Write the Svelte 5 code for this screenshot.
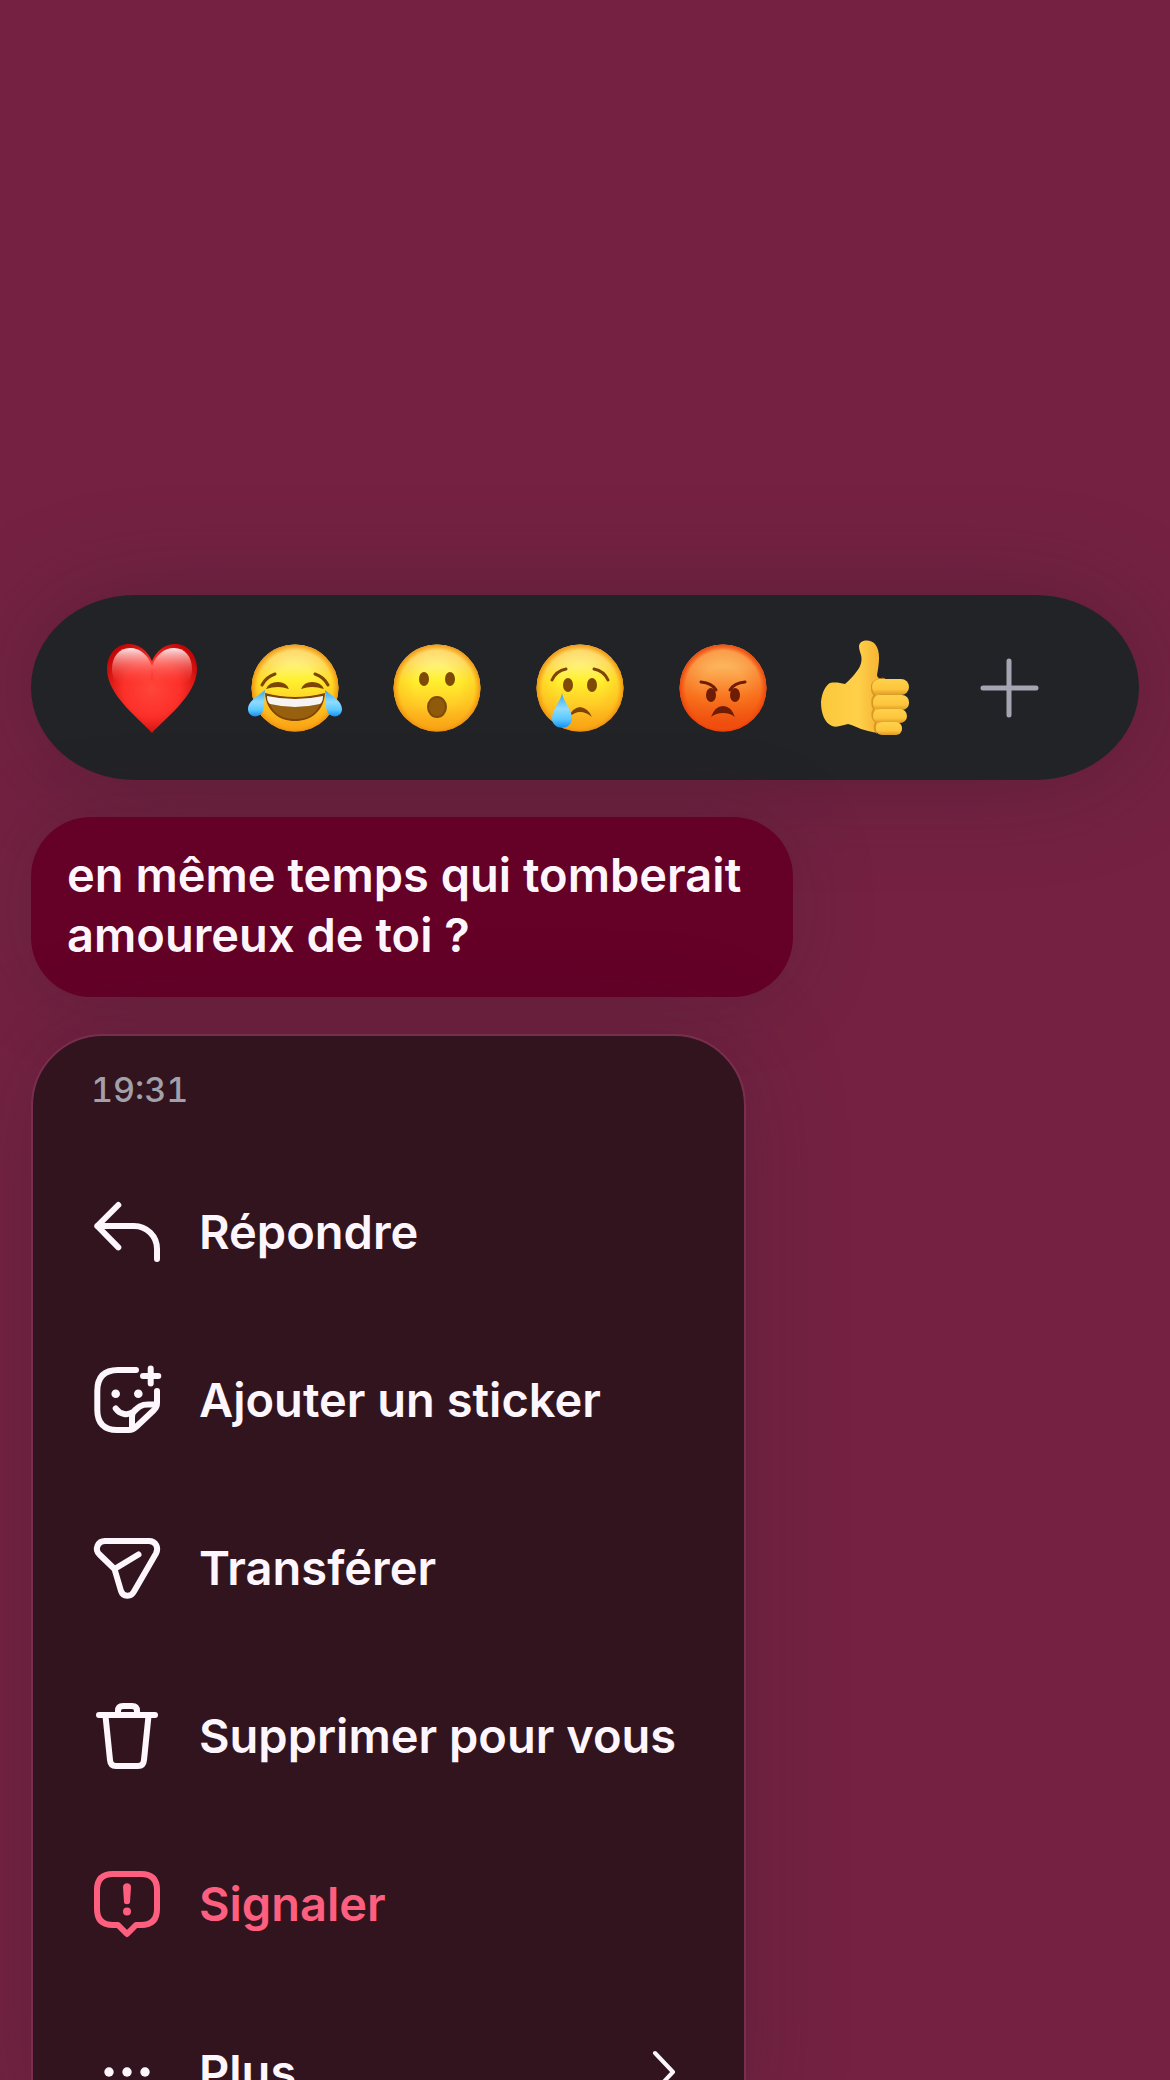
<script lang="ts">
	type IconName = 'reply' | 'sticker' | 'forward' | 'trash' | 'report' | 'more';

	interface MenuItem {
		icon: IconName;
		label: string;
		danger?: boolean;
		submenu?: boolean;
	}

	const reactions = [
		{ id: 'heart', label: 'Cœur' },
		{ id: 'joy', label: 'Mort de rire' },
		{ id: 'wow', label: 'Surpris' },
		{ id: 'cry', label: 'Triste' },
		{ id: 'angry', label: 'En colère' },
		{ id: 'thumb', label: 'Pouce levé' }
	];

	const items: MenuItem[] = [
		{ icon: 'reply', label: 'Répondre' },
		{ icon: 'sticker', label: 'Ajouter un sticker' },
		{ icon: 'forward', label: 'Transférer' },
		{ icon: 'trash', label: 'Supprimer pour vous' },
		{ icon: 'report', label: 'Signaler', danger: true },
		{ icon: 'more', label: 'Plus', submenu: true }
	];
</script>

<!-- shared gradients for the emoji -->
<svg class="defs" aria-hidden="true">
	<defs>
		<linearGradient id="face" x1="0" y1="0" x2="0" y2="1">
			<stop offset="0" stop-color="#fff3a8" />
			<stop offset="0.2" stop-color="#fff285" />
			<stop offset="0.42" stop-color="#fff02e" />
			<stop offset="0.7" stop-color="#ffcb26" />
			<stop offset="1" stop-color="#f79a12" />
		</linearGradient>
		<radialGradient id="rim" cx="0.5" cy="0.5" r="0.5">
			<stop offset="0.5" stop-color="#fbac18" stop-opacity="0" />
			<stop offset="0.86" stop-color="#fbac18" stop-opacity="0.35" />
			<stop offset="0.93" stop-color="#f8a414" stop-opacity="0.75" />
			<stop offset="1" stop-color="#ee8f10" stop-opacity="0.95" />
		</radialGradient>
		<linearGradient id="rage" x1="0" y1="0" x2="0" y2="1">
			<stop offset="0" stop-color="#fdc069" />
			<stop offset="0.25" stop-color="#fcb55c" />
			<stop offset="0.6" stop-color="#f9761f" />
			<stop offset="1" stop-color="#ea420a" />
		</linearGradient>
		<radialGradient id="rageRim" cx="0.5" cy="0.5" r="0.5">
			<stop offset="0.5" stop-color="#f4520c" stop-opacity="0" />
			<stop offset="0.86" stop-color="#f4520c" stop-opacity="0.3" />
			<stop offset="0.93" stop-color="#f25010" stop-opacity="0.75" />
			<stop offset="1" stop-color="#ea4208" stop-opacity="0.95" />
		</radialGradient>
		<radialGradient id="heart" cx="0.5" cy="0.5" r="0.58">
			<stop offset="0" stop-color="#ff453b" />
			<stop offset="0.55" stop-color="#fc3029" />
			<stop offset="1" stop-color="#c20606" />
		</radialGradient>
		<linearGradient id="gloss" x1="0" y1="0" x2="0" y2="1">
			<stop offset="0" stop-color="#fff" stop-opacity="0.9" />
			<stop offset="0.35" stop-color="#ff9a95" stop-opacity="0.6" />
			<stop offset="0.8" stop-color="#ff5048" stop-opacity="0" />
		</linearGradient>
		<linearGradient id="tear" x1="0" y1="0" x2="0" y2="1">
			<stop offset="0" stop-color="#2fa4f5" />
			<stop offset="0.45" stop-color="#8fdcff" />
			<stop offset="0.75" stop-color="#5cc8ff" />
			<stop offset="1" stop-color="#1590f0" />
		</linearGradient>
		<linearGradient id="hand" x1="0" y1="0" x2="1" y2="0">
			<stop offset="0" stop-color="#fcc83a" />
			<stop offset="0.5" stop-color="#ffd04a" />
			<stop offset="0.75" stop-color="#f6b836" />
			<stop offset="1" stop-color="#ffc93e" />
		</linearGradient>
		<linearGradient id="finger" x1="0" y1="0" x2="0" y2="1">
			<stop offset="0" stop-color="#ffd24c" />
			<stop offset="0.65" stop-color="#fdc53c" />
			<stop offset="1" stop-color="#dd9a26" />
		</linearGradient>
	</defs>
</svg>

<main class="screen">
	<div class="reactions" role="toolbar" aria-label="Réactions">
		{#each reactions as { id, label } (id)}
			<button class="reaction" aria-label={label}>
				<svg viewBox="-50 -50 100 100" aria-hidden="true">
					{#if id === 'heart'}
						<path
							fill="url(#heart)"
							d="M0 45C-10 33-45 8-45-19C-45-34-35-44-23-44C-13-44-4-37 0-27C4-37 13-44 23-44C35-44 45-34 45-19C45 8 10 33 0 45Z"
						/>
						<path
							fill="url(#gloss)"
							d="M-22-40C-33-40-40-31-40-19C-40-6-30 4-20 4C-9 4 0-4 0-22C-4-33-12-40-22-40Z"
						/>
						<path
							fill="url(#gloss)"
							d="M22-40C33-40 40-31 40-19C40-6 30 4 20 4C9 4 0-4 0-22C4-33 12-40 22-40Z"
						/>
					{:else if id === 'thumb'}
						<path
							fill="url(#hand)"
							d="M-6-42C-5-49 6-49 10-44C16-37 14-24 12-13C12-10 16-8 22-7L30 44C22 47 8 45-4 41C-9 39-12 37-17 36C-22 37-28 40-33 38C-40 35-44 26-44 14C-43 4-39-3-35-5C-29-6-25-5-20-4C-15-8-11-13-8-17C-3-23-3-29-4-33C-5-36-6-39-6-42Z"
						/>
						<path
							fill="none"
							stroke="#cf8f22"
							stroke-width="2"
							opacity="0.8"
							d="M20-9C13-10 6-6 7 0C7 4 8 6 10 7C6 11 7 18 9 21C6 25 7 31 11 34C9 38 9 42 12 45"
						/>
						<rect x="7" y="-9" width="37" height="16" rx="8" fill="url(#finger)" />
						<rect x="8" y="7" width="36" height="15" rx="7" fill="url(#finger)" />
						<rect x="8" y="21" width="34" height="14" rx="7" fill="url(#finger)" />
						<rect x="11" y="34" width="26" height="13" rx="6" fill="url(#finger)" />
					{:else}
						<circle r="43.5" fill={id === 'angry' ? 'url(#rage)' : 'url(#face)'} />
						<circle r="43.5" fill={id === 'angry' ? 'url(#rageRim)' : 'url(#rim)'} />
						{#if id === 'joy'}
							<g fill="none" stroke="#7d4405" stroke-width="3" stroke-linecap="round">
								<path d="M-33-3Q-29-11-20-14M33-3Q29-11 20-14" />
							</g>
							<path
								fill="#7d4405"
								d="M-29 1Q-26-6-17-6Q-9-6-6 1Q-12-1-17-1Q-23-1-29 1ZM29 1Q26-6 17-6Q9-6 6 1Q12-1 17-1Q23-1 29 1Z"
							/>
							<path fill="#7d4405" d="M-30 5Q0 13 30 5C29 23 16 33 0 33C-16 33-29 23-30 5Z" />
							<path fill="#96600e" d="M-25 16Q0 22 25 16C21 27 11 31 0 31C-11 31-21 27-25 16Z" />
							<path fill="#f6f4f2" d="M-28 8Q0 14 28 8Q28 14 25 16Q0 22-25 16Q-28 14-28 8Z" />
							<path
								fill="url(#tear)"
								d="M-30 2C-37 8-47 13-47 21C-47 30-35 31-32 23C-30 16-31 10-30 2ZM30 2C37 8 47 13 47 21C47 30 35 31 32 23C30 16 31 10 30 2Z"
							/>
						{:else if id === 'wow'}
							<ellipse cx="-13" cy="-9" rx="5" ry="7" fill="#7f4a06" />
							<ellipse cx="13" cy="-9" rx="5" ry="7" fill="#7f4a06" />
							<ellipse cy="19" rx="9" ry="10" fill="#8f5a0c" stroke="#7d4a08" stroke-width="2" />
						{:else if id === 'cry'}
							<g fill="none" stroke="#7d4405" stroke-width="3" stroke-linecap="round">
								<path d="M-28-8Q-24-17-14-19M28-8Q24-17 14-19" />
							</g>
							<ellipse cx="-12" cy="-3" rx="5" ry="7" fill="#7f4a06" />
							<ellipse cx="12" cy="-3" rx="5" ry="7" fill="#7f4a06" />
							<path fill="#7d4405" d="M-11 29Q-8 20 0 19Q8 20 12 29Q6 24 0 24Q-5 24-11 29Z" />
							<path
								fill="url(#tear)"
								d="M-18 5C-17 13-8 22-8 30C-8 43-28 43-28 30C-28 22-19 13-18 5Z"
							/>
						{:else if id === 'angry'}
							<ellipse cx="-12" cy="7" rx="5" ry="7" fill="#6e1d04" />
							<ellipse cx="12" cy="7" rx="5" ry="7" fill="#6e1d04" />
							<g fill="none" stroke="#6e1d04" stroke-width="3" stroke-linecap="round">
								<path d="M-22-6Q-11-5-7 2M22-6Q11-5 7 2" />
							</g>
							<path fill="#6e1d04" d="M-12 29Q-8 18 0 18Q8 18 12 29Q7 25 0 25Q-7 25-12 29Z" />
						{/if}
					{/if}
				</svg>
			</button>
		{/each}
		<button class="reaction" aria-label="Plus de réactions">
			<svg viewBox="-50 -50 100 100" aria-hidden="true">
				<path d="M-25 0H28M1-27V27" stroke="#a3a6b2" stroke-width="5" stroke-linecap="round" />
			</svg>
		</button>
	</div>

	<p class="bubble">en même temps qui tomberait amoureux de toi ?</p>

	<div class="menu">
		<time class="time">19:31</time>
		{#each items as item (item.icon)}
			<button class="item" class:danger={item.danger}>
				<svg class="icon" viewBox="0 0 72 72" aria-hidden="true">
					{#if item.icon === 'reply'}
						<path d="M27.3 9 6.3 30 27.3 51.3M6.3 30H43A23 23 0 0 1 66 53V63" />
					{:else if item.icon === 'sticker'}
						<path
							d="M45 6H27C13 6 6.3 13 6.3 27V46C6.3 59 13 66 26 66H38C41 66 43 65 45 63L63 46C65 44 66 42 66 39V27"
						/>
						<path d="M24.7 44.5C29 50.5 37 52 43 47.5C47 43 50 40.5 57 40.5H65M41 65V54Q41 49 44 46" />
						<path d="M59.7 4.5V19.5M52 12H67.3" />
						<g class="solid">
							<circle cx="24.7" cy="29.7" r="4.3" />
							<circle cx="47.3" cy="29.7" r="4.3" />
						</g>
					{:else if item.icon === 'forward'}
						<path
							d="M14 9H58C65 9 68 16 65 21.5L43 59.5C40 65.5 32 65 30 59L23.5 37 8.5 22.5C3 17 7 9 14 9ZM23.5 37 47.5 22.5"
						/>
					{:else if item.icon === 'trash'}
						<path
							d="M8 15H64M27 14V11Q27 6 32 6H41Q46 6 46 11V14M14.5 16 19 60Q19.5 66 25 66H47Q52.5 66 53 60L57.5 16"
						/>
					{:else if item.icon === 'report'}
						<path
							d="M22 6H50Q66 6 66 22V41Q66 57 50 57H45L36 66 27 57H22Q6 57 6 41V22Q6 6 22 6Z"
						/>
						<g class="solid">
							<path d="M32 19C32 14 40 14 40 19L39 34C39 37 33 37 33 34Z" />
							<circle cx="36" cy="43.5" r="4" />
						</g>
					{:else}
						<g class="solid">
							<circle cx="18" cy="36" r="4.7" />
							<circle cx="36" cy="36" r="4.7" />
							<circle cx="54" cy="36" r="4.7" />
						</g>
					{/if}
				</svg>
				<span>{item.label}</span>
				{#if item.submenu}
					<svg class="chevron" viewBox="0 0 24 44" aria-hidden="true">
						<path d="M3 3 21 22 3 41" />
					</svg>
				{/if}
			</button>
		{/each}
	</div>
</main>

<style>
	:global(body) {
		margin: 0;
		background: #752242;
	}

	.defs {
		position: absolute;
		width: 0;
		height: 0;
	}

	.screen {
		box-sizing: border-box;
		height: 100vh;
		overflow: hidden;
		padding: 595px 31px 0;
		display: flex;
		flex-direction: column;
		align-items: flex-start;
		gap: 37px;
		background: #752242;
		color: #fdf6fc;
		font-family: Inter, 'Liberation Sans', sans-serif;
		font-size: 47px;
		font-weight: 600;
		line-height: 60px;
	}

	button {
		padding: 0;
		border: none;
		background: none;
		color: inherit;
		font: inherit;
		cursor: pointer;
	}

	.reactions {
		box-sizing: border-box;
		flex-shrink: 0;
		align-self: stretch;
		display: flex;
		padding: 43px 60px 42px 50px;
		border-radius: 104px / 50%;
		background: #222327;
		box-shadow: 0 0 100px rgba(50, 28, 40, 0.4);
	}

	.reaction {
		flex: 1;
		display: flex;
		justify-content: center;
	}

	.reaction svg {
		width: 100px;
		height: 100px;
	}

	.bubble {
		box-sizing: border-box;
		flex-shrink: 0;
		max-width: 762px;
		margin: 0;
		padding: 28px 36px 32px;
		border-radius: 60px;
		background: #650027;
		box-shadow: 0 0 80px rgba(50, 28, 40, 0.25);
	}

	.menu {
		box-sizing: border-box;
		flex-shrink: 0;
		min-width: 714px;
		border: 2px solid #7a2e4e;
		border-radius: 72px;
		background: #32141f;
		box-shadow: 0 0 100px rgba(50, 28, 40, 0.3);
	}

	.time {
		display: block;
		padding: 32px 58px 36px;
		color: #a1a1aa;
		font-size: 34px;
		font-weight: 500;
		line-height: 44px;
		font-variant-numeric: tabular-nums;
	}

	.item {
		display: flex;
		align-items: center;
		gap: 36px;
		width: 100%;
		height: 168px;
		padding: 0 68px 0 58px;
		text-align: left;
	}

	.danger {
		color: #ff5f7f;
	}

	.icon {
		width: 72px;
		height: 72px;
		fill: none;
		stroke: currentColor;
		stroke-width: 6;
		stroke-linecap: round;
		stroke-linejoin: round;
	}

	.solid {
		fill: currentColor;
		stroke: none;
	}

	.chevron {
		width: 24px;
		height: 44px;
		margin-left: auto;
		fill: none;
		stroke: currentColor;
		stroke-width: 4;
		stroke-linecap: round;
		stroke-linejoin: round;
	}
</style>
